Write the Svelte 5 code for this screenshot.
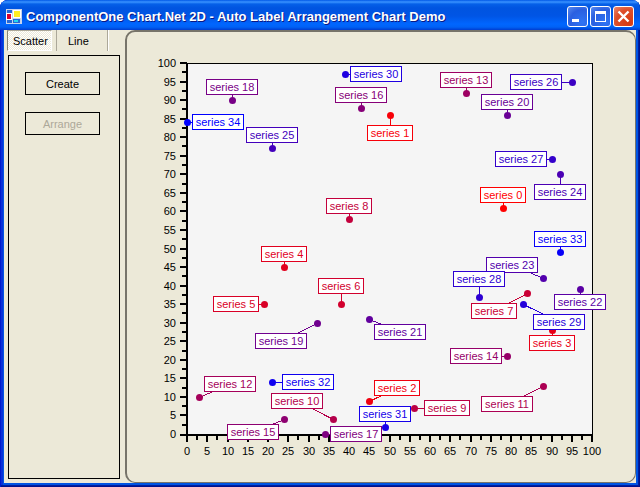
<script>
  // [series, x value, y value, label left, label top]
  const points = [
    [0, 78, 61, 480, 187],
    [1, 50, 86, 367, 125],
    [2, 45, 9, 374, 380],
    [3, 90, 28, 529, 335],
    [4, 24, 45, 261, 246],
    [5, 19, 35, 213, 296],
    [6, 38, 35, 318, 278],
    [7, 84, 38, 471, 303],
    [8, 40, 58, 326, 198],
    [9, 56, 7, 424, 400],
    [10, 36, 4, 271, 393],
    [11, 88, 13, 481, 396],
    [12, 3, 10, 204, 376],
    [13, 69, 92, 440, 72],
    [14, 79, 21, 450, 348],
    [15, 24, 4, 227, 424],
    [16, 43, 88, 335, 87],
    [17, 34, 0, 330, 426],
    [18, 11, 90, 206, 79],
    [19, 32, 30, 255, 333],
    [20, 79, 86, 481, 94],
    [21, 45, 31, 374, 324],
    [22, 97, 39, 554, 294],
    [23, 88, 42, 486, 257],
    [24, 92, 70, 534, 184],
    [25, 21, 77, 246, 127],
    [26, 95, 95, 510, 74],
    [27, 90, 74, 495, 151],
    [28, 72, 37, 453, 271],
    [29, 83, 35, 533, 314],
    [30, 39, 97, 350, 66],
    [31, 49, 2, 359, 406],
    [32, 21, 14, 282, 374],
    [33, 92, 49, 534, 231],
    [34, 0, 84, 192, 114],
  ];

  const px = (v) => Math.round(187 + v * 4.05);
  const py = (v) => Math.round(434 - v * 3.71);

  const series = points.map(([id, x, y, left, top]) => {
    const blue = Math.round((id / 34) * 255);
    return {
      id,
      cx: px(x) + 0.5,
      cy: py(y) + 0.5,
      left,
      top,
      width: id < 10 ? 46 : 52,
      color: `rgb(${255 - blue},0,${blue})`,
    };
  });

  const ticks = Array.from({ length: 41 }, (_, i) => i * 2.5);
  const majors = ticks.filter((t) => t % 5 === 0);
  let tab = $state('Scatter');
</script>

<div class="window">
  <header>
    <svg class="logo" width="16" height="16" viewBox="0 0 16 16" shape-rendering="crispEdges" aria-hidden="true">
      <path d="M0 0h16v15H0z" fill="#c8d4ec" />
      <path d="M1 1h5v3H1zM1 11h5v3H1zM7 10h7v4H7z" fill="#2468d8" />
      <path d="M0 4h6v7H0z" fill="#fff" />
      <path d="M1 5h4v5H1z" fill="#d80030" />
      <path d="M7 1h8v8H7z" fill="#fff" />
      <path d="M8 2h6v6H8z" fill="#ffee20" />
      <path d="M8 11h4v2H8z" fill="#20d8f0" />
    </svg>
    <h1>ComponentOne Chart.Net 2D - Auto Label Arrangement Chart Demo</h1>
    <div class="controls">
      <button aria-label="Minimize"><svg viewBox="0 0 19 19"><path d="M4 12h7v3H4z" fill="#fff" /></svg></button>
      <button aria-label="Maximize"><svg viewBox="0 0 19 19"><path d="M4 4h11v11H4zM5 7v7h9V7z" fill="#fff" fill-rule="evenodd" /></svg></button>
      <button class="close" aria-label="Close"><svg viewBox="0 0 19 19"><path d="M4.500 4.500l10 10M14.500 4.500l-10 10" stroke="#fff" stroke-width="2.400" /></svg></button>
    </div>
  </header>

  <main>
    <aside>
      <nav>
        <button class:active={tab === 'Scatter'} onclick={() => (tab = 'Scatter')}>Scatter</button>
        <button class:active={tab === 'Line'} onclick={() => (tab = 'Line')}>Line</button>
      </nav>
      <section class="actions">
        <button>Create</button>
        <button disabled>Arrange</button>
      </section>
    </aside>

    <section class="chart">
      <svg viewBox="127 32 508 450" role="img" aria-label="Scatter chart">
        <rect x="187.5" y="63.5" width="405" height="371" fill="#f5f5f5" stroke="#000" shape-rendering="crispEdges" />
        <g fill="#000" shape-rendering="crispEdges">
          <rect x="186" y="63" width="2" height="373" />
          <rect x="186" y="434" width="407" height="2" />
          {#each ticks as t (t)}
            {@const major = t % 5 === 0}
            <rect x={major ? 180 : 182} y={py(t) - (t === 0 ? 0 : 1)} width={major ? 7 : 5} height="2" />
            <rect x={px(t) - 1} y="435" width="2" height={major ? 7 : 5} />
          {/each}
        </g>
        {#each majors as t (t)}
          <text x="176" y={py(t) + 4} text-anchor="end">{t}</text>
          <text x={px(t)} y="455" text-anchor="middle">{t}</text>
        {/each}
        {#each series as s (s.id)}
          <line x1={s.cx} y1={s.cy} x2={s.left + s.width / 2} y2={s.top + 8} stroke={s.color} shape-rendering="crispEdges" />
          <circle cx={s.cx} cy={s.cy} r="3.5" fill={s.color} />
        {/each}
        {#each series as s (s.id)}
          <rect x={s.left + 0.5} y={s.top + 0.5} width={s.width - 1} height="15" fill="#fff" stroke={s.color} shape-rendering="crispEdges" />
          <text x={s.left + s.width / 2} y={s.top + 12} text-anchor="middle" fill={s.color}>series {s.id}</text>
        {/each}
      </svg>
    </section>
  </main>
</div>

<style>
  :global(body) {
    margin: 0;
    background: #fff;
  }

  .window {
    box-sizing: border-box;
    min-height: 100vh;
    display: flex;
    flex-direction: column;
    padding: 0 4px 4px;
    border-radius: 8px 8px 0 0;
    background: #0054e3;
    box-shadow: inset 1px 0 #0019cf, inset -1px -1px #00138c, inset -2px -2px #001ea0, inset 3px 0 #0831d9;
    font: 11px/14px "Liberation Sans", Arial, sans-serif;
    color: #000;
  }

  header {
    display: flex;
    align-items: center;
    height: 30px;
    margin: 0 -4px;
    padding: 3px 6px 0;
    box-sizing: border-box;
    border-radius: 8px 8px 0 0;
    background: linear-gradient(#0058e6 0, #3a93ff 2px, #0560e8 4px, #0054e0 8px, #0055e5 16px, #0066ff 24px, #0062f6 27px, #003dd0 30px);
  }

  h1 {
    flex: 1;
    margin: 0 0 0 4px;
    font: bold 13px/18px "Liberation Sans", Arial, sans-serif;
    color: #fff;
    text-shadow: 1px 1px #0a1883;
    white-space: nowrap;
  }

  .controls {
    display: flex;
    gap: 2px;
  }

  .controls button {
    width: 21px;
    height: 21px;
    padding: 0;
    border: 1px solid #fff;
    border-radius: 3px;
    background: radial-gradient(circle at 75% 80%, #2f74f4, #2a5fe0 60%, #5b8cf0);
  }

  .controls .close {
    background: radial-gradient(circle at 75% 80%, #d83a10, #dd4e2b 60%, #ee8a70);
  }

  .controls svg {
    display: block;
    width: 19px;
    height: 19px;
  }

  main {
    flex: 1;
    display: flex;
    background: #ece9d8;
  }

  aside {
    flex: none;
    width: 116px;
    display: flex;
    flex-direction: column;
    padding: 0 0 4px 3px;
    box-sizing: border-box;
  }

  nav {
    display: flex;
    gap: 5px;
    height: 21px;
    margin-bottom: 4px;
  }

  nav button {
    flex: none;
    width: 51px;
    padding: 0 0 0 11px;
    border: 0;
    border-right: 1px solid #aca899;
    box-shadow: 1px 0 #fff;
    background: none;
    font: inherit;
    text-align: left;
    color: inherit;
  }

  nav button.active {
    width: 45px;
    padding: 0 0 0 5px;
    border: 1px solid #fff;
    border-top-color: #aca899;
    border-left: 1px solid #888577;
    box-shadow: 4px 0 #ece9d8, 5px 0 #aca899;
    background: repeating-conic-gradient(#fff 0 25%, #ece9d8 0 50%) 0 0 / 2px 2px;
  }

  .actions {
    flex: 1;
    display: flex;
    flex-direction: column;
    gap: 17px;
    margin: 0 0 0 1px;
    padding: 16px;
    border: 1px solid #000;
  }

  .actions button {
    height: 23px;
    width: 75px;
    padding: 0;
    border: 1px solid #000;
    background: #ece9d8;
    font: inherit;
    color: #000;
  }

  .actions button:disabled {
    color: #aca899;
  }

  .chart {
    flex: 1;
    min-width: 0;
    margin-left: 5px;
    border: solid #77746a;
    border-width: 2px 1px 1px 2px;
    border-radius: 10px;
  }

  .chart svg {
    display: block;
    width: 100%;
  }
</style>
